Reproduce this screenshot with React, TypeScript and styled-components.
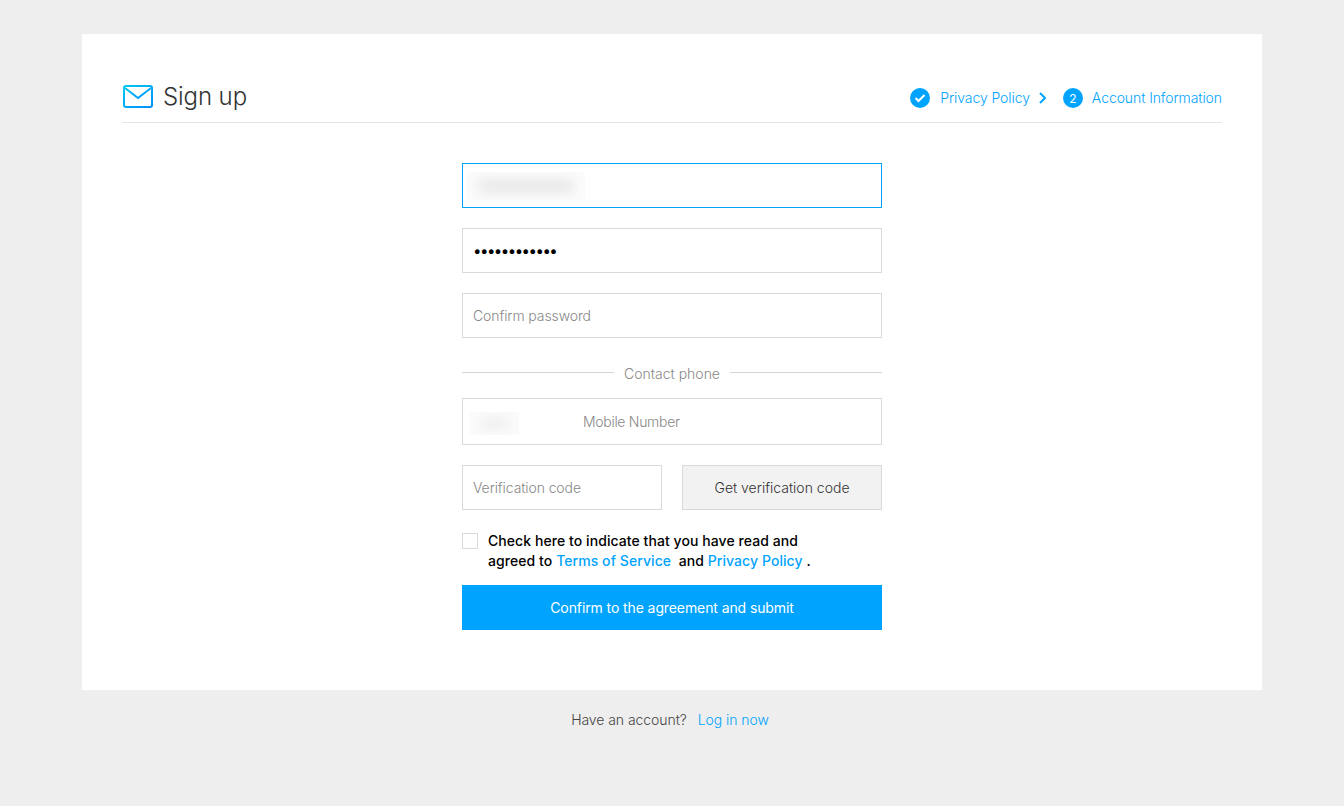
import React from 'react';
import styled, { createGlobalStyle } from 'styled-components';

const GlobalStyle = createGlobalStyle`
  html, body {
    margin: 0;
    padding: 0;
    background: #eeeeee;
  }
  * {
    box-sizing: border-box;
  }
  body {
    font-family: "Inter", "Liberation Sans", Arial, sans-serif;
    font-size: 14px;
  }
`;

const Page = styled.div`
  width: 1344px;
  height: 806px;
  padding-top: 34px;
  overflow: hidden;
`;

const Card = styled.main`
  width: 1180px;
  height: 656px;
  margin: 0 auto;
  padding: 40px 40px 0;
  background: #fff;
`;

const Header = styled.header`
  height: 49px;
  display: flex;
  align-items: center;
  justify-content: space-between;
  border-bottom: 1px solid #e5e5e5;
  padding-bottom: 4px;
`;

const Title = styled.div`
  display: flex;
  align-items: center;
  gap: 10px;
  padding-left: 1px;
  font-size: 24px;
  font-weight: 300;
  letter-spacing: -0.1px;
  color: #333;
`;

const Steps = styled.div`
  display: flex;
  align-items: center;
  margin-top: 4px;
  color: #00a4ff;
`;

const StepCircle = styled.span<{ $gap: number }>`
  width: 20px;
  height: 20px;
  border-radius: 50%;
  background: #00a4ff;
  color: #fff;
  display: flex;
  align-items: center;
  justify-content: center;
  font-size: 12px;
  margin-right: ${(p) => p.$gap}px;
`;

const StepLabel = styled.span`
  margin-bottom: 1px;
  font-size: 14px;
  font-weight: 300;
  letter-spacing: -0.08px;
`;

const Chevron = styled.svg`
  margin: 0 16px 0 8px;
`;

const Form = styled.form`
  width: 420px;
  margin: 40px auto 0;
  display: flex;
  flex-direction: column;
`;

const FieldWrap = styled.div`
  position: relative;
  margin-bottom: 20px;
`;

const Input = styled.input<{ $focused?: boolean; $tall?: boolean }>`
  display: block;
  width: 100%;
  height: ${(p) => (p.$tall ? '47px' : '45px')};
  padding: 0 10px;
  border: 1px solid ${(p) => (p.$focused ? '#00a4ff' : '#d9d9d9')};
  border-radius: 0;
  outline: none;
  background: #fff;
  font: inherit;
  font-size: 14px;
  font-weight: 300;
  letter-spacing: -0.1px;
  color: #000;

  &::placeholder {
    color: #888;
    opacity: 1;
  }
`;

const PasswordInput = styled(Input)`
  font-size: 15px;
  font-weight: 400;
  letter-spacing: -1.5px;
`;

const PhoneInput = styled(Input)`
  padding-left: 120px;
  letter-spacing: -0.3px;
`;

const Blurred = styled.div<{ $left: number; $top: number; $width: number; $height: number }>`
  position: absolute;
  left: ${(p) => p.$left}px;
  top: ${(p) => p.$top}px;
  width: ${(p) => p.$width}px;
  height: ${(p) => p.$height}px;
  overflow: hidden;
  background: #fbfbfb;

  &::after {
    content: '';
    position: absolute;
    inset: 8px 12px;
    background: #e6e6e6;
    filter: blur(6px);
  }
`;

const Divider = styled.div`
  display: flex;
  align-items: center;
  gap: 10px;
  height: 20px;
  margin: 5px 0 15px;
  font-weight: 300;
  color: #888;

  &::before,
  &::after {
    content: '';
    flex: 1;
    height: 1px;
    margin-top: -2px;
    background: #d4d4d4;
  }
`;

const CodeRow = styled.div`
  display: grid;
  grid-template-columns: 200px 200px;
  gap: 20px;
  margin-bottom: 23px;
`;

const CodeButton = styled.button`
  height: 45px;
  border: 1px solid #d9d9d9;
  background: #f2f2f2;
  font: inherit;
  font-weight: 300;
  color: #333;
`;

const Agreement = styled.div`
  display: flex;
  gap: 10px;
  height: 40px;
  margin-bottom: 12px;
`;

const CheckBox = styled.span`
  width: 16px;
  height: 16px;
  flex: none;
  border: 1px solid #d9d9d9;
  background: #fff;
`;

const AgreementText = styled.div`
  width: 340px;
  margin-top: -2px;
  line-height: 20px;
  font-weight: 500;
  letter-spacing: 0.07px;
  color: #000;
`;

const TextLink = styled.a`
  color: #00a4ff;
  text-decoration: none;
`;

const Submit = styled.button`
  height: 45px;
  border: 0;
  background: #00a4ff;
  color: #fff;
  font: inherit;
  font-weight: 400;
  letter-spacing: -0.1px;
`;

const Footer = styled.div`
  margin-top: 21px;
  padding-right: 4px;
  text-align: center;
  font-weight: 300;
  letter-spacing: -0.06px;
  color: #444;
`;

const FooterLink = styled(TextLink)`
  margin-left: 11px;
`;

export default function App() {
  return (
    <>
      <GlobalStyle />
      <Page>
        <Card>
          <Header>
            <Title>
              <svg width="30" height="23" viewBox="0 0 30 23" fill="none">
                <defs>
                  <linearGradient id="mail" x1="0" y1="0" x2="1" y2="1">
                    <stop offset="0" stopColor="#00c8f0" />
                    <stop offset="1" stopColor="#0090ff" />
                  </linearGradient>
                </defs>
                <rect x="1" y="1" width="28" height="21" rx="2" stroke="url(#mail)" strokeWidth="2" />
                <path d="M2 3l13 10L28 3" stroke="url(#mail)" strokeWidth="2" />
              </svg>
              Sign up
            </Title>
            <Steps>
              <StepCircle $gap={10}>
                <svg width="12" height="10" viewBox="0 0 12 10" fill="none">
                  <path d="M1.5 5l3 3 6-6" stroke="#fff" strokeWidth="2" />
                </svg>
              </StepCircle>
              <StepLabel>Privacy Policy</StepLabel>
              <Chevron width="9" height="14" viewBox="0 0 9 14" fill="none">
                <path d="M2 2l5 5-5 5" stroke="#00a4ff" strokeWidth="2" />
              </Chevron>
              <StepCircle $gap={9}>2</StepCircle>
              <StepLabel>Account Information</StepLabel>
            </Steps>
          </Header>
          <Form>
            <FieldWrap>
              <Input $focused readOnly />
              <Blurred $left={5} $top={9} $width={118} $height={28} />
            </FieldWrap>
            <FieldWrap>
              <PasswordInput type="password" readOnly value="abcdefghijkl" />
            </FieldWrap>
            <FieldWrap>
              <Input placeholder="Confirm password" readOnly />
            </FieldWrap>
            <Divider>Contact phone</Divider>
            <FieldWrap>
              <PhoneInput $tall placeholder="Mobile Number" readOnly />
              <Blurred $left={8} $top={14} $width={49} $height={23} />
            </FieldWrap>
            <CodeRow>
              <Input placeholder="Verification code" readOnly />
              <CodeButton type="button">Get verification code</CodeButton>
            </CodeRow>
            <Agreement>
              <CheckBox />
              <AgreementText>
                Check here to indicate that you have read and
                <br />
                agreed to <TextLink href="#">Terms of Service</TextLink>&nbsp; and{' '}
                <TextLink href="#">Privacy Policy</TextLink> .
              </AgreementText>
            </Agreement>
            <Submit type="button">Confirm to the agreement and submit</Submit>
          </Form>
        </Card>
        <Footer>
          Have an account?
          <FooterLink href="#">Log in now</FooterLink>
        </Footer>
      </Page>
    </>
  );
}
